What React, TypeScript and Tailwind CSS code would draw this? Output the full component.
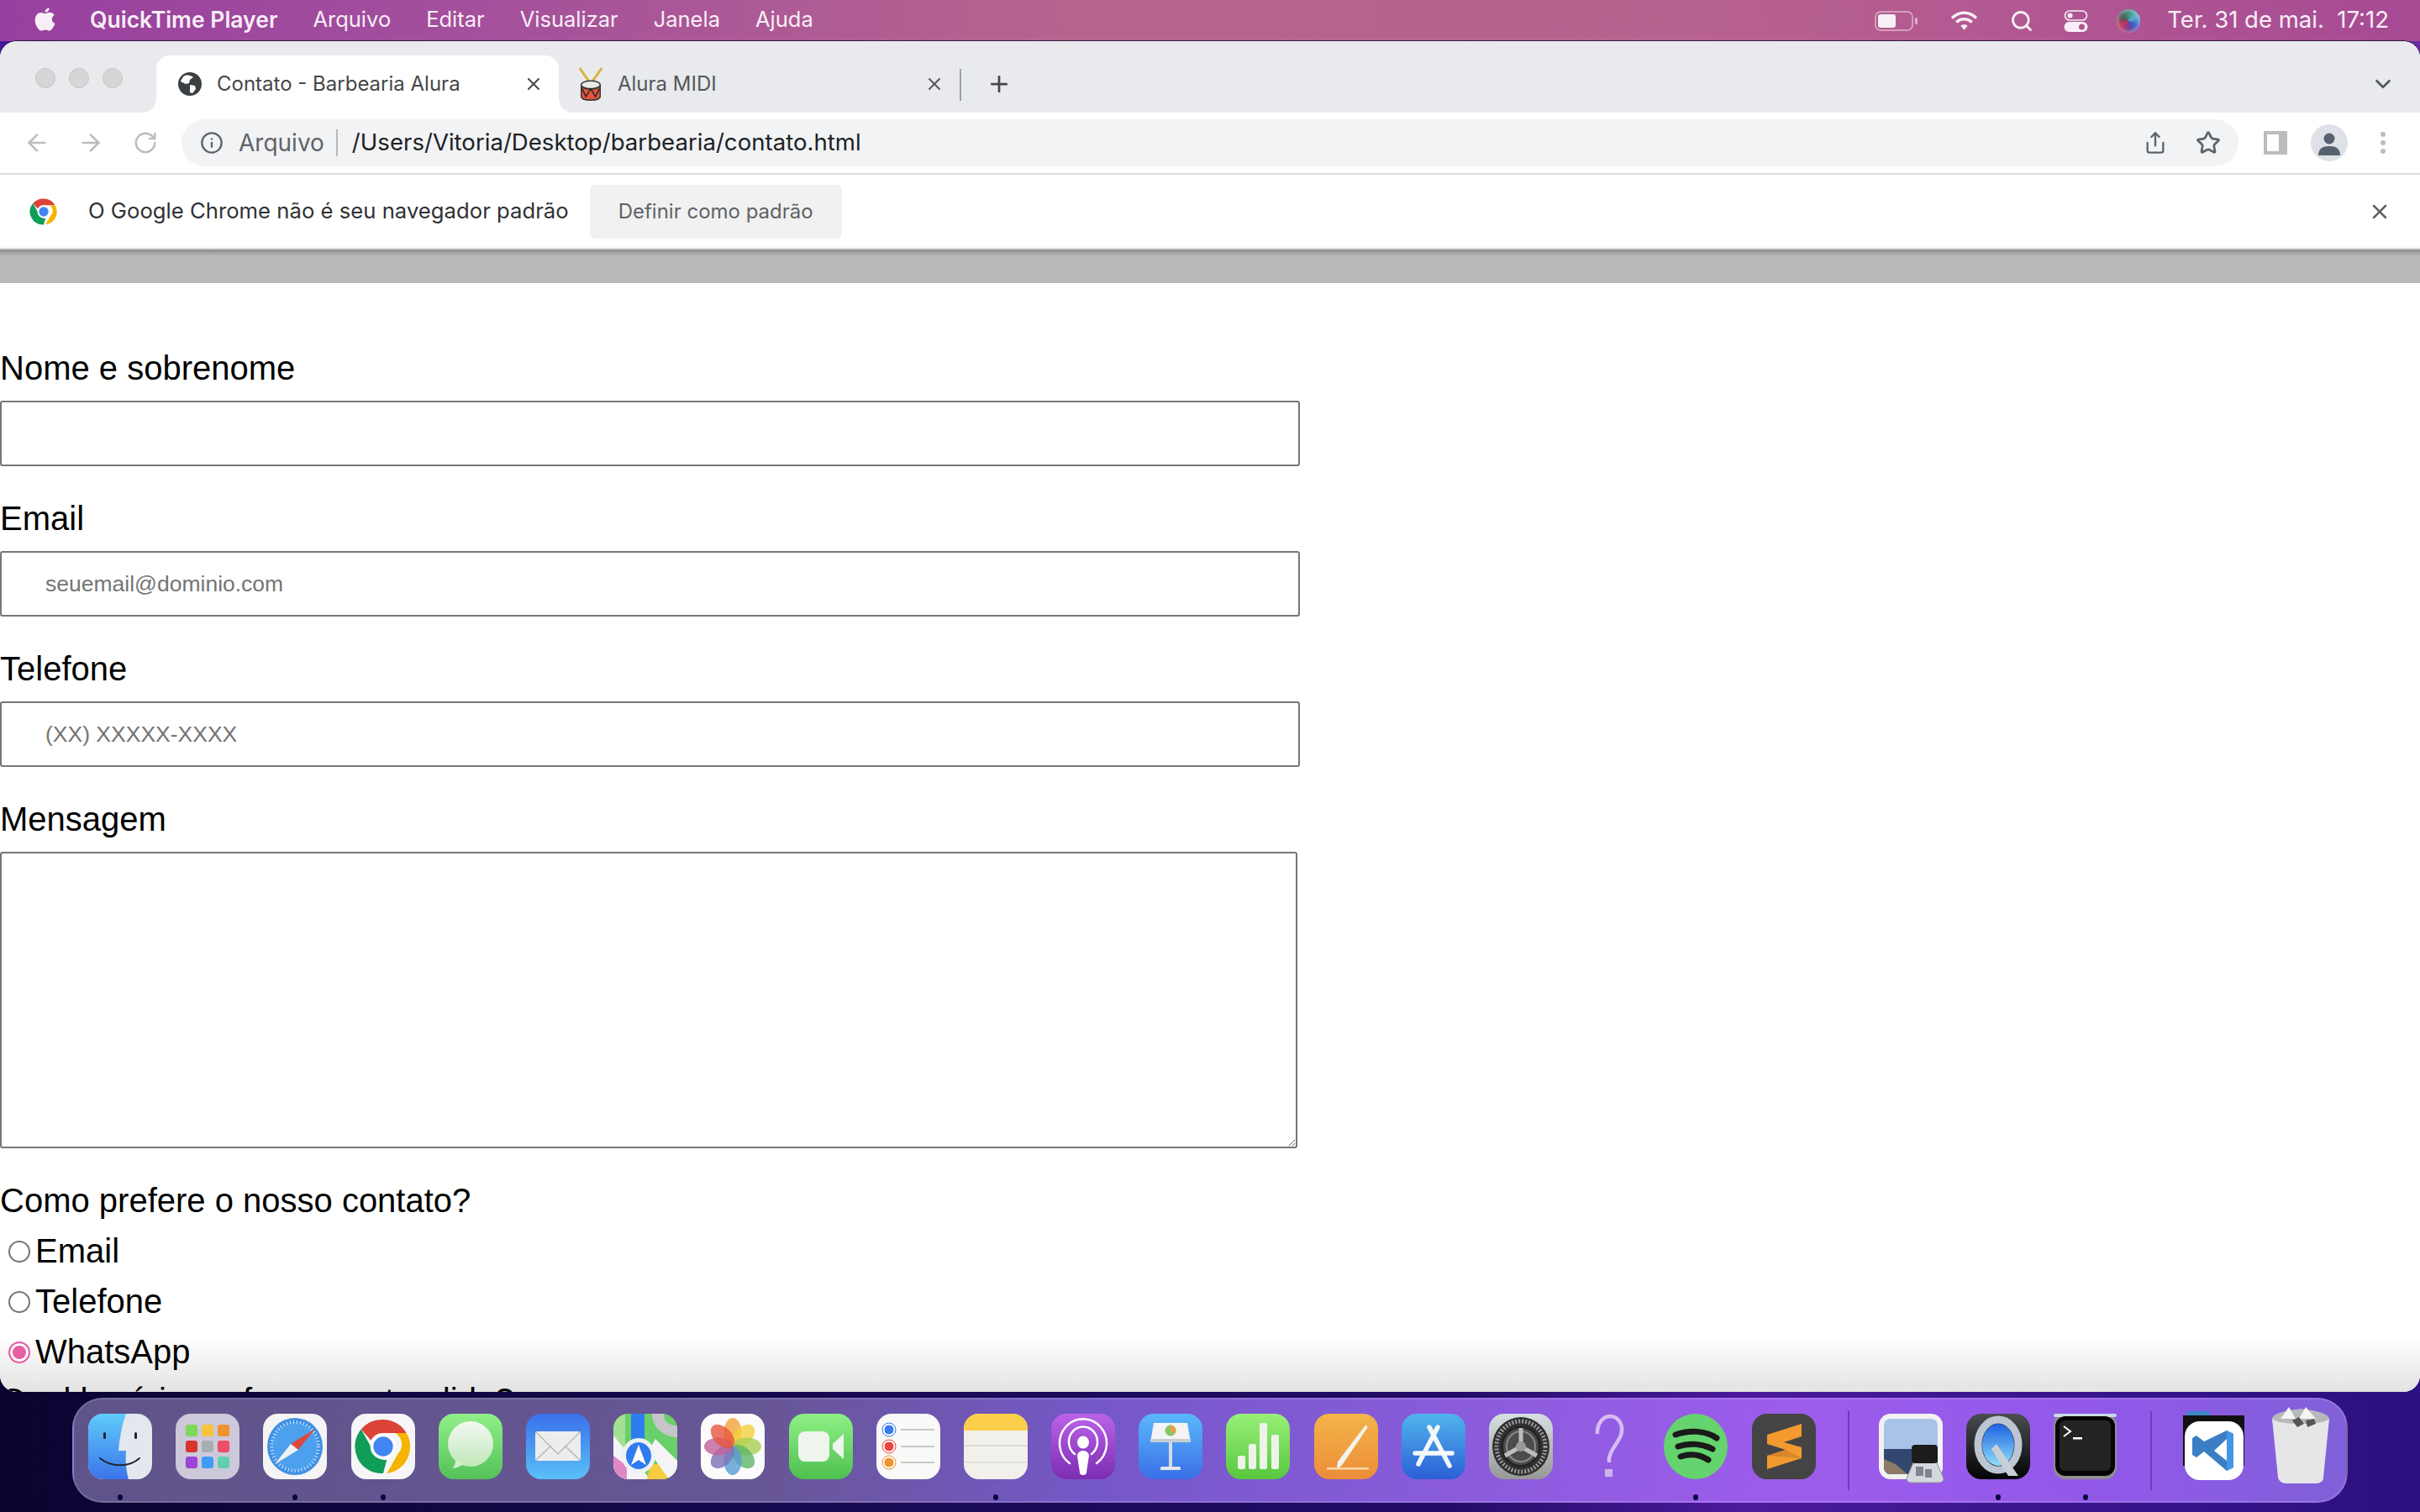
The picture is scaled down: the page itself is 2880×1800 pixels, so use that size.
import React from 'react';
import { ArrowLeft, ArrowRight, ChevronDown, Info, Plus, RotateCw, Search, Share, Star, X } from 'lucide-react';

// dock icons share one 76x78 box
const Svg = ({ children, className = '' }: { children: React.ReactNode; className?: string }) => (
  <svg viewBox="0 0 76 78" className={`w-[76px] h-[78px] ${className}`}>
    {children}
  </svg>
);

const ChromeLogo = ({ size = 34 }: { size?: number }) => (
  <svg viewBox="0 0 48 48" width={size} height={size}>
    <path d="M24 2a22 22 0 0 1 19 11H24a11 11 0 0 0-10 6L6 10A22 22 0 0 1 24 2z" fill="#db4437" />
    <path d="M43 13a22 22 0 0 1-16 33l9-16a11 11 0 0 0-2-17z" fill="#f4b400" />
    <path d="M6 10l9 16a11 11 0 0 0 12 9l-3 11A22 22 0 0 1 6 10z" fill="#0f9d58" />
    <circle cx="24" cy="24" r="10.5" fill="#fff" />
    <circle cx="24" cy="24" r="8" fill="#4285f4" />
  </svg>
);

const Finder = () => (
  <Svg>
    <defs>
      <linearGradient id="fd" x1="0" y1="0" x2="0" y2="1"><stop offset="0" stopColor="#5fcbfb" /><stop offset="1" stopColor="#3b74ea" /></linearGradient>
    </defs>
    <rect width="76" height="78" rx="18" fill="#e3e8ee" />
    <path d="M18 0h27c-5 14-8 30-9 44h9c-1 12 0 24 3 34H18A18 18 0 0 1 0 60V18A18 18 0 0 1 18 0z" fill="url(#fd)" />
    <rect x="18" y="22" width="3" height="8" rx="1.5" fill="#223" />
    <rect x="55" y="22" width="3" height="8" rx="1.5" fill="#223" />
    <path d="M14 53c13 11 35 11 47 0" fill="none" stroke="#22262e" strokeWidth="2" strokeLinecap="round" />
  </Svg>
);

const Launchpad = () => {
  const colors = ['#7cd95a', '#f7c43c', '#ef9331', '#d8352c', '#a8adb3', '#ee4e68', '#9a45d8', '#3f9cf5', '#62d0b0'];
  return (
    <Svg>
      <rect width="76" height="78" rx="18" fill="#cdc8da" />
      {colors.map((c, i) => (
        <rect key={c} x={12 + (i % 3) * 19} y={13 + Math.floor(i / 3) * 19} width="14" height="14" rx="3" fill={c} />
      ))}
    </Svg>
  );
};

const Safari = () => (
  <Svg>
    <rect width="76" height="78" rx="18" fill="#f4f4f4" />
    <ellipse cx="38" cy="39" rx="33" ry="34" fill="#3f8fe4" />
    <ellipse cx="38" cy="39" rx="28" ry="29" fill="#4da0ee" stroke="#d7e9fa" strokeWidth="4" strokeDasharray="1 3" />
    <path d="M62 18 33 36l9 7z" fill="#e0473c" />
    <path d="M14 60 33 36l9 7z" fill="#f2f2f2" />
  </Svg>
);

const Chrome = () => (
  <Svg>
    <rect width="76" height="78" rx="18" fill="#f6f6f8" />
    <foreignObject x="3" y="4" width="70" height="70">
      <ChromeLogo size={70} />
    </foreignObject>
  </Svg>
);

const Messages = () => (
  <Svg>
    <defs>
      <linearGradient id="ms" x1="0" y1="0" x2="0" y2="1"><stop offset="0" stopColor="#90f08a" /><stop offset="1" stopColor="#54c158" /></linearGradient>
      <linearGradient id="mb" x1="0" y1="0" x2="0" y2="1"><stop offset="0" stopColor="#f4f8f2" /><stop offset="1" stopColor="#bfe8b8" /></linearGradient>
    </defs>
    <rect width="76" height="78" rx="18" fill="url(#ms)" />
    <ellipse cx="38" cy="36" rx="27" ry="27" fill="url(#mb)" />
    <path d="M20 54c0 6-1 9-4 11 5 0 11-3 14-6z" fill="#cfeec9" />
  </Svg>
);

const Mail = () => (
  <Svg>
    <defs>
      <linearGradient id="ml" x1="0" y1="0" x2="0" y2="1"><stop offset="0" stopColor="#3a70ea" /><stop offset="1" stopColor="#5ac0f8" /></linearGradient>
    </defs>
    <rect width="76" height="78" rx="18" fill="url(#ml)" />
    <rect x="11" y="21" width="54" height="35" rx="3" fill="#ededed" />
    <path d="M12 22l26 26 26-26M12 55l18-17M64 55 46 38" fill="none" stroke="#b9b9b9" strokeWidth="1.5" />
  </Svg>
);

const Maps = () => (
  <Svg>
    <clipPath id="mp"><rect width="76" height="78" rx="18" /></clipPath>
    <g clipPath="url(#mp)">
      <rect width="76" height="78" fill="#6ad06a" />
      <path d="M0 0h14v78H0z" fill="#a4e092" />
      <path d="M0 26 44 78H0z" fill="#f4f4f6" />
      <path d="M0 50v28h16V62z" fill="#e187c6" />
      <path d="M44 60h20v18H40z" fill="#f6cc3e" />
      <path d="M76 56 50 30 42 44l24 34h10z" fill="#f4f4f6" />
      <path d="M46 0c0 16 14 28 30 28V14C64 14 60 8 60 0z" fill="#c6c6c8" />
      <rect x="21" y="0" width="16" height="38" fill="#2f7cf0" />
      <ellipse cx="30" cy="50" rx="20" ry="21" fill="#eef1f4" />
      <ellipse cx="30" cy="50" rx="15" ry="16" fill="#2f7cf0" />
      <path d="M30 37l9 24-9-6-9 6z" fill="#fff" />
    </g>
  </Svg>
);

const Photos = () => {
  const petals = ['#f2a43a', '#f4d13c', '#a9cf54', '#5fb56a', '#5a9bd3', '#7d72b8', '#c0629a', '#e6553f'];
  return (
    <Svg>
      <rect width="76" height="78" rx="18" fill="#fbfbfb" />
      {petals.map((c, i) => (
        <ellipse key={c} cx="38" cy="22" rx="10.5" ry="17" fill={c} fillOpacity="0.8" transform={`rotate(${i * 45} 38 39)`} />
      ))}
    </Svg>
  );
};

const FaceTime = () => (
  <Svg>
    <defs>
      <linearGradient id="ft" x1="0" y1="0" x2="0" y2="1"><stop offset="0" stopColor="#8ef085" /><stop offset="1" stopColor="#4fc04f" /></linearGradient>
    </defs>
    <rect width="76" height="78" rx="18" fill="url(#ft)" />
    <rect x="11" y="21" width="37" height="36" rx="8" fill="#eef5ec" />
    <path d="M52 36l13-12v30L52 42z" fill="#eef5ec" />
  </Svg>
);

const Reminders = () => (
  <Svg>
    <rect width="76" height="78" rx="18" fill="#f9f9f7" />
    {[['#3a7bef', 19], ['#e8483e', 39], ['#ef9331', 58]].map(([c, y]) => (
      <g key={c as string}>
        <circle cx="15" cy={y as number} r="6" fill={c as string} stroke="#fff" strokeWidth="1" />
        <circle cx="15" cy={y as number} r="8" fill="none" stroke={c as string} strokeWidth="1" />
        <rect x="29" y={(y as number) - 1} width="40" height="2" fill="#c8c8c8" />
      </g>
    ))}
  </Svg>
);

const Notes = () => (
  <Svg>
    <clipPath id="nt"><rect width="76" height="78" rx="18" /></clipPath>
    <g clipPath="url(#nt)">
      <rect width="76" height="78" fill="#f2f0ea" />
      <rect width="76" height="20" fill="#fbcf4a" />
      <rect y="37" width="76" height="2" fill="#dcdad4" />
      <rect y="57" width="76" height="1.5" fill="#dcdad4" />
    </g>
  </Svg>
);

const Podcasts = () => (
  <Svg>
    <defs>
      <linearGradient id="pc" x1="0" y1="0" x2="0" y2="1"><stop offset="0" stopColor="#bb63e8" /><stop offset="1" stopColor="#7c2db2" /></linearGradient>
    </defs>
    <rect width="76" height="78" rx="18" fill="url(#pc)" />
    <path d="M22 59a28 29 0 1 1 32 0M28 48a17 18 0 1 1 20 0" fill="none" stroke="#fff" strokeWidth="2.5" strokeLinecap="round" />
    <ellipse cx="38" cy="34" rx="7" ry="7.5" fill="#fff" />
    <path d="M31 50a7 6 0 0 1 14 0l-3 20a4 3 0 0 1-8 0z" fill="#fff" />
  </Svg>
);

const Keynote = () => (
  <Svg>
    <defs>
      <linearGradient id="kn" x1="0" y1="0" x2="0" y2="1"><stop offset="0" stopColor="#5ab8fa" /><stop offset="1" stopColor="#3a6fe8" /></linearGradient>
    </defs>
    <rect width="76" height="78" rx="18" fill="url(#kn)" />
    <path d="M18 11h40l4 23H14z" fill="#f4f4f4" />
    <rect x="14" y="30" width="48" height="4" fill="#c9ccd2" />
    <circle cx="38" cy="20" r="6.5" fill="#86c56c" />
    <path d="M38 20V13.5a6.5 6.5 0 0 1 5 10.5z" fill="#e8a13c" />
    <rect x="36" y="34" width="4" height="30" fill="#d8dce2" />
    <rect x="26" y="63" width="24" height="4" rx="1.5" fill="#e4e6ea" />
  </Svg>
);

const Numbers = () => (
  <Svg>
    <defs>
      <linearGradient id="nm" x1="0" y1="0" x2="0" y2="1"><stop offset="0" stopColor="#98ef78" /><stop offset="1" stopColor="#58c83e" /></linearGradient>
    </defs>
    <rect width="76" height="78" rx="18" fill="url(#nm)" />
    <rect x="14" y="50" width="9" height="16" rx="2" fill="#eef3ea" />
    <rect x="27" y="36" width="9" height="30" rx="2" fill="#eef3ea" />
    <rect x="40" y="11" width="9" height="55" rx="2" fill="#eef3ea" />
    <rect x="54" y="25" width="9" height="41" rx="2" fill="#eef3ea" />
  </Svg>
);

const Pages = () => (
  <Svg>
    <defs>
      <linearGradient id="pg" x1="0" y1="0" x2="0" y2="1"><stop offset="0" stopColor="#f4b54a" /><stop offset="1" stopColor="#ec8c38" /></linearGradient>
    </defs>
    <rect width="76" height="78" rx="18" fill="url(#pg)" />
    <path d="M60 15c2-2 4-1 3 2L34 60l-5 5-2-1 1-7z" fill="#f4f2ee" />
    <rect x="15" y="64" width="50" height="2.5" fill="#f8d7a8" />
  </Svg>
);

const AppStore = () => (
  <Svg>
    <defs>
      <linearGradient id="as" x1="0" y1="0" x2="0" y2="1"><stop offset="0" stopColor="#50b4ec" /><stop offset="1" stopColor="#2b60d6" /></linearGradient>
    </defs>
    <rect width="76" height="78" rx="18" fill="url(#as)" />
    <path d="M43 16 21 58M33 16l24 46M16 47h44M24 52l-4 8" fill="none" stroke="#f4f7fb" strokeWidth="5.5" strokeLinecap="round" />
  </Svg>
);

const Settings = () => (
  <Svg>
    <defs>
      <linearGradient id="st" x1="0" y1="0" x2="0" y2="1"><stop offset="0" stopColor="#d7dfe2" /><stop offset="1" stopColor="#979797" /></linearGradient>
    </defs>
    <rect width="76" height="78" rx="18" fill="url(#st)" />
    <ellipse cx="38" cy="39" rx="34" ry="35" fill="#2f2f2f" />
    <ellipse cx="38" cy="39" rx="29" ry="30" fill="none" stroke="#9a9a9a" strokeWidth="5" strokeDasharray="2 2" />
    <ellipse cx="38" cy="39" rx="22" ry="23" fill="#4c4c4c" stroke="#222" strokeWidth="2" />
    <ellipse cx="38" cy="39" rx="17" ry="18" fill="none" stroke="#8a8a8a" strokeWidth="2" />
    <path d="M38 39V17M38 39 19 50M38 39l19 11" stroke="#bdbdbd" strokeWidth="5" />
    <circle cx="38" cy="39" r="6" fill="#9a9a9a" />
  </Svg>
);

const Missing = () => (
  <Svg>
    <path d="M25 24c-1-12 7-21 15-21 9 0 15 8 14 18-1 12-13 19-15 32v5" fill="none" stroke="#d6bcf4" strokeWidth="4.5" />
    <rect x="34" y="66" width="9" height="9" fill="#cdb3ee" />
  </Svg>
);

const Spotify = () => (
  <Svg>
    <ellipse cx="38" cy="39" rx="38" ry="39" fill="#65d46e" />
    <path d="M14 25c16-6 36-5 49 4M17 39c14-5 30-3 41 3M20 51c12-4 24-2 33 4" fill="none" stroke="#1a1a1a" strokeWidth="7" strokeLinecap="round" />
  </Svg>
);

const Sublime = () => (
  <Svg>
    <rect width="76" height="78" rx="18" fill="#444444" />
    <path d="M59 12v15L38 34l21 6v13L18 66V50l22-7-22-7V25z" fill="#f29a2e" />
    <path d="M18 50l22-7 19 10z" fill="#d9862a" />
  </Svg>
);

const Preview = () => (
  <Svg className="overflow-visible">
    <rect width="76" height="78" rx="14" fill="#f2f2f2" />
    <rect x="6" y="6" width="64" height="66" rx="8" fill="#a9c3e8" />
    <path d="M6 42h64v30H14a8 8 0 0 1-8-8z" fill="#31476f" />
    <path d="M6 54l14 6 14 12H14a8 8 0 0 1-8-8z" fill="#8a7a66" />
    <path d="M42 56h26l9 21c0 3-2 5-5 5H38c-3 0-5-2-5-5z" fill="#d4d8dc" stroke="#8f9499" strokeWidth="1" />
    <rect x="39" y="37" width="31" height="22" rx="4" fill="#1c1c1c" />
    <rect x="44" y="63" width="9" height="11" fill="#7d8590" />
    <rect x="55" y="66" width="8" height="10" fill="#7d8590" />
  </Svg>
);

const QuickTime = () => (
  <Svg>
    <defs>
      <linearGradient id="qt" x1="0" y1="0" x2="0" y2="1"><stop offset="0" stopColor="#4b4d50" /><stop offset="1" stopColor="#030303" /></linearGradient>
      <linearGradient id="qb" x1="0" y1="0" x2="0" y2="1"><stop offset="0" stopColor="#1b62e0" /><stop offset="1" stopColor="#8fdcfa" /></linearGradient>
    </defs>
    <rect width="76" height="78" rx="18" fill="url(#qt)" />
    <ellipse cx="38" cy="37" rx="24" ry="30" fill="none" stroke="#bcc6d2" strokeWidth="9" />
    <ellipse cx="38" cy="37" rx="19" ry="25" fill="url(#qb)" />
    <path d="M36 36l26 38H50L30 42z" fill="#c8ced6" />
  </Svg>
);

const Terminal = () => (
  <Svg>
    <rect width="75" height="78" rx="14" fill="#8f8f8f" />
    <rect y="0" width="75" height="4" rx="2" fill="#c6dbe6" />
    <rect x="2" y="3" width="71" height="71" rx="12" fill="#050505" />
    <rect x="7" y="8" width="61" height="60" rx="6" fill="#232323" />
    <path d="M12 15l8 6-8 6" fill="none" stroke="#fff" strokeWidth="2" />
    <rect x="23" y="28" width="11" height="2.5" fill="#fff" />
  </Svg>
);

const VsCode = () => (
  <Svg className="overflow-visible">
    <rect x="4" y="-3" width="28" height="6" rx="3" fill="#3f88c8" />
    <rect x="0" y="2" width="73" height="60" fill="#111" />
    <rect x="2" y="9" width="70" height="70" rx="18" fill="#fff" />
    <path d="M52 20 60 24v40l-8 4-27-23-9 7-5-3V29l5-3 9 7z" fill="#3b7ec4" />
    <path d="M52 20 60 24v40l-8 4 0-15-15-9 15-9z" fill="#4496e6" />
    <path d="M52 30 37 44l15 12z" fill="#fff" />
  </Svg>
);

const Trash = () => (
  <Svg className="overflow-visible">
    <path d="M2 6h68l-7 70c0 4-4 7-8 7H18c-4 0-8-3-9-7z" fill="#e6e6e8" />
    <path d="M2 6C4 -2 22 -4 36 -6c14 2 32 4 34 12-6 8-60 8-68 0z" fill="#b6b8bc" />
    <path d="M12 6l10-14 8 14zM34 6l8-14 12 14z" fill="#f4f4f4" />
    <path d="M26 8l8-4 6 8-8 4zM42 8l10-2 2 6-10 4z" fill="#555" />
  </Svg>
);

// app row of the dock; running apps get a dot underneath
const DockItem = ({ icon, dot }: { icon: React.ReactNode; dot?: boolean }) => (
  <div className="relative w-[76px] h-[78px] shrink-0">
    {icon}
    {dot && <span className="absolute left-[35px] top-[96px] w-[6px] h-[7px] rounded-full bg-[#0b0740]" />}
  </div>
);

const Field = ({ label, placeholder }: { label: string; placeholder?: string }) => (
  <div className="mb-[39px]">
    <label className="block text-[40px] leading-[46px] mb-[16px]">{label}</label>
    <input
      placeholder={placeholder}
      className="block w-[1547px] h-[78px] border-2 border-[#767676] rounded-[3px] pl-[52px] text-[26.500px] bg-transparent placeholder:text-[#757575]"
    />
  </div>
);

const RadioRow = ({ label, checked }: { label: string; checked?: boolean }) => (
  <label className="flex items-center h-[46px] mt-[14px] pl-[10px] gap-[6px] text-[40px] leading-[46px]">
    <input
      type="radio"
      name="contato"
      defaultChecked={checked}
      className="appearance-none w-[26px] h-[26px] rounded-full border-2 border-[#767676] bg-white mt-[1px] checked:border-[#e85fa6] checked:bg-[#e85fa6] checked:shadow-[inset_0_0_0_3px_white]"
    />
    {label}
  </label>
);

export default function App() {
  return (
    <div className="w-[2880px] h-[1800px] overflow-hidden bg-[linear-gradient(90deg,#0a0530_0%,#170a52_35%,#230c68_60%,#4b1a9c_72%,#3d1690_82%,#2a1080_100%)] font-['Inter',sans-serif]">
      {/* menu bar */}
      <div className="h-[49px] flex items-center pl-[38px] pr-[37px] text-[25.500px] text-[#f8eef6] bg-[linear-gradient(90deg,#97409f_0%,#a4509c_20%,#b8648e_45%,#b8628f_70%,#b05792_85%,#a64a94_100%)]">
        <svg viewBox="0 0 24 30" className="w-[30px] h-[34px] mr-[39px] -mt-[3px]" fill="#f8eef6">
          <path d="M17 3c.2 2-1.800 4.800-4.500 4.600C12.200 5.200 14.600 3 17 3zM12.500 9c1.200 0 2.700-1.200 4.800-1.200 1 0 3.700.3 5 2.700-3.800 2.300-3 7.400.7 8.900-1.200 3.300-3.600 7.600-6 7.600-1.500 0-2.400-1-4-1-1.700 0-2.800 1-4.200 1C5.800 27 2 21 2 16c0-5 3.200-8 6.300-8 1.800 0 3.200 1 4.200 1z" />
        </svg>
        <span className="font-semibold text-[26.500px] mr-[42px] -mt-[2px]">QuickTime Player</span>
        <div className="flex gap-[42px] -mt-[2px]">
          <span>Arquivo</span>
          <span>Editar</span>
          <span>Visualizar</span>
          <span>Janela</span>
          <span>Ajuda</span>
        </div>
        <div className="ml-auto flex items-center">
          <svg viewBox="0 0 52 24" className="w-[52px] h-[24px] mr-[38px]">
            <rect x="1" y="1" width="44" height="22" rx="6" fill="none" stroke="#f3d4e4" strokeOpacity="0.7" strokeWidth="1.5" />
            <rect x="4" y="4" width="21" height="16" rx="3" fill="#f8eef6" />
            <rect x="48" y="8" width="3" height="8" rx="1.5" fill="#f3d4e4" fillOpacity="0.7" />
          </svg>
          <svg viewBox="0 0 32 24" className="w-[33px] h-[25px] mr-[38px]" fill="none" stroke="#f8eef6" strokeWidth="3.4">
            <path d="M2 9c8-8 20-8 28 0M7 14c5-5 13-5 18 0" />
            <path d="M12 18c2-1.800 6-1.800 8 0l-4 5z" fill="#f8eef6" stroke="none" />
          </svg>
          <Search size={28} strokeWidth={2.4} className="mr-[36px] text-[#f8eef6]" />
          <svg viewBox="0 0 28 26" className="w-[29px] h-[26px] mr-[34px]">
            <rect x="1" y="1" width="26" height="11" rx="5.500" fill="none" stroke="#f8eef6" strokeWidth="1.6" />
            <circle cx="7" cy="6.500" r="3" fill="#f8eef6" />
            <rect y="14" width="28" height="12" rx="6" fill="#f8eef6" />
            <circle cx="21" cy="20" r="3.500" fill="#b05792" />
          </svg>
          <div className="w-[28px] h-[28px] rounded-full mr-[32px] bg-[conic-gradient(#3d8f7a,#5fb0c8,#3a5fc8,#7a3b90,#c8345c,#555,#3d8f7a)] shadow-[inset_0_0_6px_rgba(255,255,255,0.6)]" />
          <span className="text-[27.500px] -mt-[2px]">Ter. 31 de mai.&nbsp;&nbsp;17:12</span>
        </div>
      </div>

      {/* browser window */}
      <div className="h-[1608px] bg-[linear-gradient(90deg,#45199c,#6a2ca0)] bg-no-repeat bg-[length:100%_30px]">
        <div className="h-full rounded-[20px] overflow-hidden flex flex-col bg-white shadow-[0_-1px_0_rgba(20,10,40,0.8)]">
          {/* tabs */}
          <div className="h-[85px] shrink-0 flex items-end bg-[#e8eaed] text-[24px]">
            <div className="flex gap-[16px] pl-[42px] self-start mt-[32px]">
              <span className="w-[24px] h-[24px] rounded-full bg-[#d6d6d6] border border-[#c6c6c6]" />
              <span className="w-[24px] h-[24px] rounded-full bg-[#d6d6d6] border border-[#c6c6c6]" />
              <span className="w-[24px] h-[24px] rounded-full bg-[#d6d6d6] border border-[#c6c6c6]" />
            </div>
            <div className="relative ml-[40px] w-[479px] h-[68px] bg-white rounded-t-[16px] flex items-center pl-[26px] pr-[18px] text-[#45474a]">
              <span className="absolute left-[-16px] bottom-0 w-[16px] h-[16px] bg-[radial-gradient(circle_at_0_0,transparent_15.500px,white_16px)]" />
              <span className="absolute right-[-16px] bottom-0 w-[16px] h-[16px] bg-[radial-gradient(circle_at_100%_0,transparent_15.500px,white_16px)]" />
              <svg viewBox="0 0 28 28" className="w-[28px] h-[28px] mr-[18px]">
                <circle cx="14" cy="14" r="14" fill="#3c4043" />
                <path d="M8 4c4-1 8 0 10 2l-4 3-1 4-4 1-6-3c1-3 3-6 5-7zM14 15l6 1 1 4-4 5-3-1z" fill="#fff" />
              </svg>
              <span>Contato - Barbearia Alura</span>
              <X size={24} strokeWidth={2} className="ml-auto text-[#45474a]" />
            </div>
            <div className="w-[477px] h-[68px] flex items-center pl-[22px] pr-[18px] text-[#55575a]">
              <svg viewBox="0 0 34 44" className="w-[32px] h-[42px] mr-[16px]">
                <path d="M3 2l12 17M31 2 19 19" stroke="#d8b23a" strokeWidth="3" />
                <ellipse cx="17" cy="23" rx="12" ry="5" fill="#e8e8e8" stroke="#333" strokeWidth="1.500" />
                <path d="M5 24v14c0 6 24 6 24 0V24c-2 6-22 6-24 0z" fill="#e2553f" stroke="#333" strokeWidth="1.500" />
                <path d="M6 28l5 10 6-10 6 10 5-10" fill="none" stroke="#222" strokeWidth="1.500" />
              </svg>
              <span>Alura MIDI</span>
              <X size={24} strokeWidth={2} className="ml-auto" />
            </div>
            <span className="w-[2px] h-[38px] bg-[#9aa0a6] mb-[14px]" />
            <Plus size={30} strokeWidth={2.2} className="ml-[30px] mb-[19px] text-[#45474a]" />
            <ChevronDown size={30} strokeWidth={2.2} className="ml-auto mr-[29px] mb-[19px] text-[#55585c]" />
          </div>

          {/* toolbar */}
          <div className="h-[72px] shrink-0 flex items-center">
            <ArrowLeft size={32} strokeWidth={2} className="ml-[28px] text-[#babdc2]" />
            <ArrowRight size={32} strokeWidth={2} className="ml-[32px] text-[#babdc2]" />
            <RotateCw size={30} strokeWidth={2} className="ml-[34px] text-[#babdc2]" />
            <div className="ml-[28px] w-[2448px] h-[56px] rounded-[28px] bg-[#f1f3f4] flex items-center pl-[22px] pr-[14px]">
              <Info size={28} strokeWidth={2} className="text-[#5f6368]" />
              <span className="ml-[18px] text-[28px] text-[#5f6368]">Arquivo</span>
              <span className="ml-[14px] w-[2px] h-[32px] bg-[#b8babd]" />
              <span className="ml-[17px] text-[27.600px] text-[#202124]">/Users/Vitoria/Desktop/barbearia/contato.html</span>
              <Share size={28} strokeWidth={2} className="ml-auto text-[#5f6368]" />
              <Star size={30} strokeWidth={2.2} className="ml-[34px] mr-[7px] text-[#5f6368]" />
            </div>
            <svg viewBox="0 0 28 28" className="w-[28px] h-[28px] ml-[30px]">
              <path fillRule="evenodd" d="M0 0h28v28H0zM4 4v20h14V4z" fill="#babcbf" />
            </svg>
            <div className="ml-[28px] w-[44px] h-[44px] rounded-full bg-[#dee1e6] flex items-end justify-center overflow-hidden">
              <svg viewBox="0 0 28 28" className="w-[28px] h-[32px] mb-[5px]" fill="#56606f">
                <circle cx="14" cy="8" r="6.500" />
                <path d="M1 28c0-8 5-11 13-11s13 3 13 11z" />
              </svg>
            </div>
            <div className="ml-[39px] flex flex-col gap-[4px]">
              <span className="w-[6px] h-[6px] rounded-full bg-[#bdbdbd]" />
              <span className="w-[6px] h-[6px] rounded-full bg-[#bdbdbd]" />
              <span className="w-[6px] h-[6px] rounded-full bg-[#bdbdbd]" />
            </div>
          </div>

          {/* default browser bar */}
          <div className="h-[91px] shrink-0 flex items-center border-y-2 border-[#dcdcdc] pl-[35px] pr-[34px] bg-white">
            <ChromeLogo size={34} />
            <span className="ml-[36px] text-[25.700px] text-[#303134]">O Google Chrome não é seu navegador padrão</span>
            <button className="ml-[25px] w-[300px] h-[64px] rounded-[6px] bg-[#f1f1f1] text-[24px] text-[#5f6368]">Definir como padrão</button>
            <X size={28} strokeWidth={2.2} className="ml-auto text-[#5f6368]" />
          </div>

          {/* page */}
          <div className="flex-1 min-h-0 overflow-hidden bg-[linear-gradient(180deg,#ffffff_calc(100%-66px),#e3e3e3_100%)] font-['Liberation_Sans',Arial,sans-serif] text-black">
            <div className="h-[40px] bg-[linear-gradient(180deg,#8c8c8c_0px,#b9b9b9_8px)]" />
            <form className="pt-[78px]">
              <Field label="Nome e sobrenome" />
              <Field label="Email" placeholder="seuemail@dominio.com" />
              <Field label="Telefone" placeholder="(XX) XXXXX-XXXX" />
              <div className="mb-[39px]">
                <label className="block text-[40px] leading-[46px] mb-[16px]">Mensagem</label>
                <textarea className="block w-[1544px] h-[353px] border-2 border-[#767676] rounded-[3px] resize bg-white" />
              </div>
              <div className="text-[40px] leading-[46px]">Como prefere o nosso contato?</div>
              <RadioRow label="Email" />
              <RadioRow label="Telefone" />
              <RadioRow label="WhatsApp" checked />
              <div className="text-[40px] leading-[46px] mt-[12px]">Qual horário prefere ser atendido?</div>
            </form>
          </div>
        </div>
      </div>

      {/* dock */}
      <div className="ml-[86px] mt-[7px] w-[2708px] h-[125px] rounded-[36px] border-2 border-white/15 flex items-start pl-[17px] pt-[17px] gap-[28.200px] bg-[linear-gradient(90deg,#5f5489_0%,#675696_30%,#7558c8_45%,#8f5ce0_65%,#9d5cec_76%,#9058e8_90%,#8060d8_100%)]">
        <DockItem icon={<Finder />} dot />
        <DockItem icon={<Launchpad />} />
        <DockItem icon={<Safari />} dot />
        <DockItem icon={<Chrome />} dot />
        <DockItem icon={<Messages />} />
        <DockItem icon={<Mail />} />
        <DockItem icon={<Maps />} />
        <DockItem icon={<Photos />} />
        <DockItem icon={<FaceTime />} />
        <DockItem icon={<Reminders />} />
        <DockItem icon={<Notes />} dot />
        <DockItem icon={<Podcasts />} />
        <DockItem icon={<Keynote />} />
        <DockItem icon={<Numbers />} />
        <DockItem icon={<Pages />} />
        <DockItem icon={<AppStore />} />
        <DockItem icon={<Settings />} />
        <DockItem icon={<Missing />} />
        <DockItem icon={<Spotify />} dot />
        <DockItem icon={<Sublime />} />
        <span className="w-[2px] h-[94px] -mt-[3px] ml-[10px] mr-[7px] shrink-0 bg-[#6a3cc0]" />
        <DockItem icon={<Preview />} />
        <DockItem icon={<QuickTime />} dot />
        <DockItem icon={<Terminal />} dot />
        <span className="w-[2px] h-[94px] -mt-[3px] ml-[10px] mr-[9px] shrink-0 bg-[#6a3cc0]" />
        <DockItem icon={<VsCode />} />
        <DockItem icon={<Trash />} />
      </div>
    </div>
  );
}
